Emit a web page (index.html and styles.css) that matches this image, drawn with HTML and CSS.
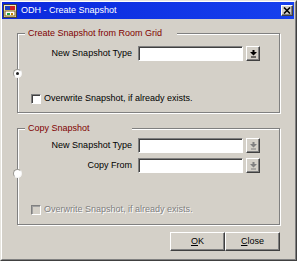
FILE: index.html
```html
<!DOCTYPE html>
<html lang="en">
<head>
  <meta charset="UTF-8" />
  <title>ODH - Create Snapshot</title>
  <link rel="stylesheet" href="styles.css">
</head>
<body>
  <div class="window">
    <div class="frame">
      <div class="titlebar">
        <svg class="app-icon" width="14" height="14" viewBox="0 0 14 14">
          <rect x="0.5" y="0.5" width="13" height="13" fill="#f4ecb0" stroke="#404040"/>
          <rect x="2" y="2" width="5" height="4" fill="#2040c0"/>
          <rect x="7" y="2" width="5" height="4" fill="#d02020"/>
          <rect x="2" y="7" width="10" height="5" fill="#ffffff" stroke="#806020" stroke-width="1"/>
          <rect x="4" y="9" width="3" height="2" fill="#20a040"/>
          <rect x="8" y="9" width="2" height="2" fill="#c08000"/>
        </svg>
        <span class="title">ODH - Create Snapshot</span>
        <span class="close-btn">
          <svg width="8" height="7" viewBox="0 0 8 7">
            <path d="M1 0.5 L7 6.5 M7 0.5 L1 6.5" stroke="#000" stroke-width="1.6"/>
          </svg>
        </span>
      </div>

      <div class="option option-room">
        <span class="radio checked"></span>
        <fieldset class="group">
          <legend class="legend-room">Create Snapshot from Room Grid</legend>
          <div class="field first">
            <span class="label">New Snapshot Type</span>
            <span class="input"></span>
            <span class="drop">
              <svg width="7" height="8" viewBox="0 0 7 8"><path d="M2.5 0h2v2h2.5L3.5 5.5 0 2h2.5z M1 6.5h5v1h-5z" fill="#000"/></svg>
            </span>
          </div>
          <label class="check">
            <span class="box"></span>
            <span>Overwrite Snapshot, if already exists.</span>
          </label>
        </fieldset>
      </div>

      <div class="option option-copy">
        <span class="radio"></span>
        <fieldset class="group">
          <legend class="legend-copy">Copy Snapshot</legend>
          <div class="field first">
            <span class="label">New Snapshot Type</span>
            <span class="input"></span>
            <span class="drop off">
              <svg width="7" height="8" viewBox="0 0 7 8"><path d="M2.5 0h2v2h2.5L3.5 5.5 0 2h2.5z M1 6.5h5v1h-5z" fill="#808080"/></svg>
            </span>
          </div>
          <div class="field">
            <span class="label">Copy From</span>
            <span class="input"></span>
            <span class="drop off">
              <svg width="7" height="8" viewBox="0 0 7 8"><path d="M2.5 0h2v2h2.5L3.5 5.5 0 2h2.5z M1 6.5h5v1h-5z" fill="#808080"/></svg>
            </span>
          </div>
          <label class="check disabled">
            <span class="box"></span>
            <span>Overwrite Snapshot, if already exists.</span>
          </label>
        </fieldset>
      </div>

      <div class="actions">
        <button class="btn"><u>O</u>K</button>
        <button class="btn"><u>C</u>lose</button>
      </div>
    </div>
  </div>
</body>
</html>
```

FILE: styles.css
```css
* {
  box-sizing: border-box;
}

body {
  margin: 0;
  background: #d4d0c8;
  font-family: "Liberation Sans", Arial, sans-serif;
  font-size: 9px;
  line-height: 11px;
  color: #000;
}

.window {
  width: 297px;
  height: 261px;
  border: 1px solid;
  border-color: #e6e4de #404040 #404040 #e6e4de;
}

.frame {
  height: 100%;
  border: 1px solid;
  border-color: #fff #808080 #808080 #fff;
  padding: 0 1px 0 0;
  display: flex;
  flex-direction: column;
}

/* title bar */
.titlebar {
  height: 17px;
  display: flex;
  align-items: center;
  padding: 0 1px 0 1px;
  background: linear-gradient(90deg, #0a28dc, #1640ee);
  color: #fff;
}

.app-icon {
  margin-right: 4px;
  flex: none;
}

.title {
  flex: 1;
  white-space: nowrap;
}

.close-btn {
  width: 12px;
  height: 11px;
  display: flex;
  align-items: center;
  justify-content: center;
  background: #d4d0c8;
  border: 1px solid;
  border-color: #fff #404040 #404040 #fff;
  box-shadow: inset -1px -1px #808080;
}

/* option groups */
.option {
  position: relative;
  margin-left: 15px;
  width: 263px;
}

.option-room {
  margin-top: 9px;
}

.option-copy {
  margin-top: 10px;
}

.group {
  margin: 0;
  padding: 0 0 8px;
  border: 1px solid #808080;
  box-shadow: inset 1px 1px #fff, 1px 1px #fff;
}

.option-copy .group {
  padding-bottom: 9px;
}

.group legend {
  margin-left: 7px;
  padding: 0 0 0 3px;
  background: #d4d0c8;
  color: #800000;
  line-height: 11px;
}

.legend-room {
  width: 152px;
}

.legend-copy {
  width: 107px;
}

.radio {
  position: absolute;
  left: -4px;
  width: 9px;
  height: 9px;
  border-radius: 50%;
  background: #fff;
  border: 1px solid;
  border-color: #9a9892 #f4f4f4 #f4f4f4 #9a9892;
  display: flex;
  align-items: center;
  justify-content: center;
}

.option-room .radio {
  top: 41px;
}

.option-copy .radio {
  top: 46px;
}

.radio.checked::after {
  content: "";
  width: 3px;
  height: 3px;
  border-radius: 50%;
  background: #202020;
}

/* rows */
.field {
  display: flex;
  align-items: center;
  height: 15px;
  margin: 5px 0 0 13px;
}

.option-room .field.first {
  margin-top: 7px;
}

.option-copy .field.first {
  margin-top: 4px;
}

.label {
  width: 101px;
  margin-right: 6px;
  text-align: right;
  white-space: nowrap;
}

.input {
  width: 105px;
  height: 15px;
  background: #fff;
  border: 1px solid;
  border-color: #808080 #fff #fff #808080;
  box-shadow: inset 1px 1px #404040;
}

.drop {
  width: 14px;
  height: 15px;
  margin-left: 3px;
  display: flex;
  align-items: center;
  justify-content: center;
  background: #d4d0c8;
  border: 1px solid;
  border-color: #fff #404040 #404040 #fff;
  box-shadow: inset -1px -1px #808080;
}

.check {
  display: flex;
  align-items: center;
  margin: 32px 0 0 13px;
  white-space: nowrap;
}

.check.disabled {
  margin-top: 31px;
  color: #808080;
  text-shadow: 1px 1px #fff;
}

.box {
  width: 10px;
  height: 10px;
  margin-right: 3px;
  background: #fff;
  border: 1px solid;
  border-color: #808080 #fff #fff #808080;
  box-shadow: inset 1px 1px #404040;
}

.check.disabled .box {
  background: #d4d0c8;
  box-shadow: inset 1px 1px #a0a0a0;
}

/* buttons */
.actions {
  display: flex;
  justify-content: flex-end;
  margin-top: 7px;
  padding-right: 14px;
}

.btn {
  width: 55px;
  height: 19px;
  padding: 0;
  font: inherit;
  color: #000;
  background: #d4d0c8;
  border: 1px solid;
  border-color: #fff #404040 #404040 #fff;
  box-shadow: inset -1px -1px #808080;
}
```
